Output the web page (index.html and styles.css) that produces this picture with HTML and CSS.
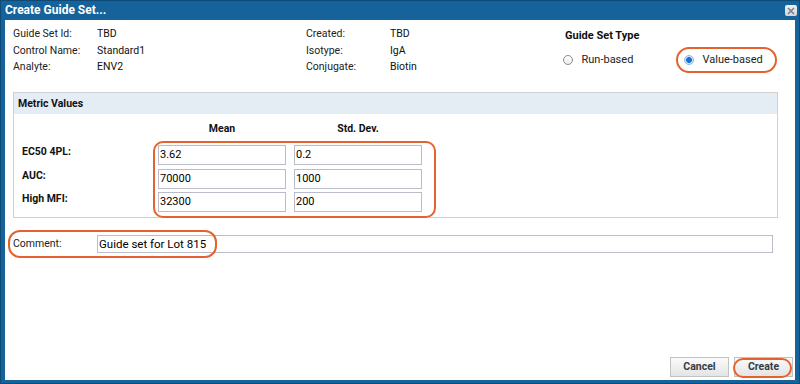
FILE: index.html
```html
<!DOCTYPE html>
<html>
<head>
<meta charset="utf-8">
<link rel="stylesheet" href="styles.css">
</head>
<body>
<div class="window">
  <div class="titlebar">
    <span class="title">Create Guide Set...</span>
    <span class="close"><svg width="8" height="8" viewBox="0 0 8 8"><path d="M1 1 L7 7 M7 1 L1 7" stroke="#7d8186" stroke-width="1.6" fill="none"/></svg></span>
  </div>
  <div class="body">
    <div class="top">
      <div class="info">
        <span class="lbl">Guide Set Id:</span><span class="val">TBD</span><span class="lbl">Created:</span><span class="val">TBD</span>
        <span class="lbl">Control Name:</span><span class="val">Standard1</span><span class="lbl">Isotype:</span><span class="val">IgA</span>
        <span class="lbl">Analyte:</span><span class="val">ENV2</span><span class="lbl">Conjugate:</span><span class="val">Biotin</span>
      </div>
      <div class="gstype">
        <div class="gstitle">Guide Set Type</div>
        <div class="radios">
          <label class="radio"><span class="dot"></span><span class="rtext">Run-based</span></label>
          <label class="radio"><span class="dot checked"></span><span class="rtext ringed">Value-based</span></label>
        </div>
      </div>
    </div>

    <div class="panel">
      <div class="panel-head">Metric Values</div>
      <div class="panel-body">
        <div class="metrics">
          <span></span><span class="colhead">Mean</span><span class="colhead">Std. Dev.</span>
          <span class="mlabel">EC50 4PL:</span><span class="inp">3.62</span><span class="inp">0.2</span>
          <span class="mlabel">AUC:</span><span class="inp">70000</span><span class="inp">1000</span>
          <span class="mlabel">High MFI:</span><span class="inp">32300</span><span class="inp">200</span>
        </div>
      </div>
    </div>

    <div class="comment">
      <span class="clabel">Comment:</span>
      <span class="cinput">Guide set for Lot 815</span>
    </div>

    <div class="footer">
      <span class="btn">Cancel</span>
      <span class="btn ringed-btn">Create</span>
    </div>
  </div>
</div>
</body>
</html>
```
FILE: styles.css
```css
* { box-sizing: border-box; }
html, body { margin: 0; padding: 0; }
body { font-family: Roboto, "Noto Sans", sans-serif; color: #222; }

.window {
  width: 800px;
  height: 384px;
  background: #15639a;
  border: 1px solid #0e4a76;
  display: flex;
  flex-direction: column;
}

.titlebar {
  height: 19px;
  display: flex;
  align-items: center;
  justify-content: space-between;
  padding: 0 2px 0 4px;
}
.title {
  color: #fff;
  font-weight: 700;
  font-size: 12px;
  line-height: 19px;
}
.close {
  width: 12px;
  height: 11px;
  background: linear-gradient(#eef0f2, #d3d7db);
  border-radius: 2px;
  display: flex;
  align-items: center;
  justify-content: center;
}

.body {
  margin: 0 4px;
  width: 790px;
  height: 360px;
  background: #fff;
  display: flex;
  flex-direction: column;
}

.top {
  display: flex;
  padding: 6px 0 0 8px;
  height: 55.5px;
}
.info {
  display: grid;
  grid-template-columns: 84px 209px 84px 175px;
  grid-auto-rows: 16.5px;
  font-size: 10.5px;
  line-height: 16.5px;
}
.lbl { color: #222; }
.val { color: #111; }

.gstype { margin-top: 3px; }
.gstitle {
  font-weight: 700;
  font-size: 11px;
  line-height: 14px;
  color: #111;
}
.radios {
  display: flex;
  margin-top: 10px;
  margin-left: -2px;
}
.radio {
  display: flex;
  align-items: center;
  width: 121px;
  font-size: 11px;
  line-height: 14px;
  color: #222;
}
.dot {
  width: 10px;
  height: 10px;
  border-radius: 50%;
  border: 1px solid #8c8c8c;
  background: linear-gradient(#fff, #ececec);
  margin-right: 8.5px;
  flex: none;
}
.dot.checked {
  border-color: #8fb3dc;
  background: radial-gradient(circle, #1a6fd6 0, #1a6fd6 2.6px, #d7e6f7 3.2px);
}
.rtext { position: relative; }
.ringed::after {
  content: "";
  position: absolute;
  left: -27px;
  right: -14px;
  top: -6px;
  bottom: -6px;
  border: 2px solid #e4622d;
  border-radius: 13px;
}

.panel {
  margin: 16.5px 0 0 8px;
  width: 765px;
  border: 1px solid #d0d0d0;
}
.panel-head {
  height: 21px;
  line-height: 21px;
  padding-left: 4px;
  background: #e4ecf4;
  font-weight: 700;
  font-size: 10.5px;
  color: #111;
}
.panel-body {
  padding: 8px 0 5px 8px;
}
.metrics {
  position: relative;
  display: grid;
  grid-template-columns: 128px 128px 128px;
  grid-template-rows: 19.5px 20px 20px 20px;
  column-gap: 8px;
  row-gap: 3.5px;
}
.metrics::after {
  content: "";
  position: absolute;
  left: 131px;
  top: 19px;
  width: 279px;
  height: 73px;
  border: 2px solid #e4622d;
  border-radius: 10px;
  pointer-events: none;
}
.colhead {
  text-align: center;
  font-weight: 700;
  font-size: 10.5px;
  line-height: 14px;
  color: #111;
}
.mlabel {
  font-weight: 700;
  font-size: 10.5px;
  line-height: 14px;
  color: #111;
}
.inp {
  height: 20px;
  border: 1px solid #b9bccb;
  font-size: 11px;
  line-height: 18px;
  padding-left: 1px;
  color: #000;
}

.comment {
  position: relative;
  display: flex;
  margin: 17px 0 0 8px;
  height: 18px;
}
.comment::after {
  content: "";
  position: absolute;
  left: -5px;
  width: 205px;
  top: -5px;
  bottom: -5px;
  border: 2px solid #e4622d;
  border-radius: 12px;
}
.clabel {
  width: 84px;
  font-size: 10.5px;
  line-height: 18px;
  color: #222;
}
.cinput {
  width: 676px;
  height: 18px;
  border: 1px solid #b9bccb;
  font-size: 11.5px;
  line-height: 16px;
  padding-left: 1px;
  color: #000;
}

.footer {
  margin-top: auto;
  display: flex;
  justify-content: flex-end;
  gap: 5px;
  padding: 0 2px 3px 0;
}
.btn {
  position: relative;
  width: 59px;
  height: 20px;
  border: 1px solid #c2c2c2;
  background: linear-gradient(#fbfbfb, #e4e4e4);
  font-weight: 700;
  font-size: 10.5px;
  line-height: 18px;
  text-align: center;
  color: #353c45;
}
.ringed-btn::after {
  content: "";
  position: absolute;
  left: -2px;
  right: 0;
  top: 0;
  bottom: -2px;
  border: 2px solid #e4622d;
  border-radius: 10px;
}
```
